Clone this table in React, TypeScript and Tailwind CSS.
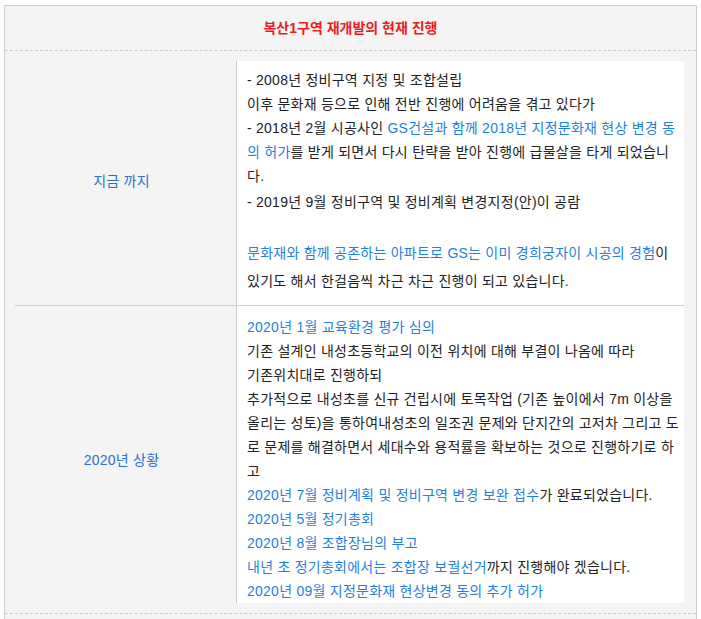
import React from "react";

const B = ({ children }: { children: React.ReactNode }) => (
  <span className="text-[#1f80de]">{children}</span>
);

export default function App() {
  return (
    <div className="pt-[5px] pl-[4px] font-[family-name:'Liberation_Sans','Noto_Sans_CJK_KR',sans-serif] text-[14px] text-[#222]">
      <div className="w-[693px] border border-[#cccccc] bg-[#f4f4f4]">
        <div className="h-[45px] flex items-center justify-center border-b border-dashed border-[#cccccc] text-[14px] font-bold text-[#ee1b24]">
          복산1구역 재개발의 현재 진행
        </div>
        <div className="pl-[10px] pr-[12px] pt-[10px] pb-[10px] tracking-[0.25px]">
          <div className="flex border-b border-[#cccccc]">
            <div className="w-[222px] shrink-0 border-r border-[#c8c8c8] flex items-center justify-center pr-[8px] pb-[3px] text-[#2a70c8]">
              지금 까지
            </div>
            <div className="flex-1 bg-white pl-[10px] pt-[7px] pb-[10px] whitespace-nowrap">
              <div className="leading-[24px]">
                - 2008년 정비구역 지정 및 조합설립
                <br />
                이후 문화재 등으로 인해 전반 진행에 어려움을 겪고 있다가
                <br />
                - 2018년 2월 시공사인 <B>GS건설과 함께 2018년 지정문화재 현상 변경 동</B>
                <br />
                <B>의 허가</B>를 받게 되면서 다시 탄략을 받아 진행에 급물살을 타게 되었습니
                <br />
                다.
              </div>
              <div className="mt-[2px] leading-[24px]">
                - 2019년 9월 정비구역 및 정비계획 변경지정(안)이 공람
              </div>
              <div className="mt-[25px] leading-[28px]">
                <B>문화재와 함께 공존하는 아파트로 GS는 이미 경희궁자이 시공의 경험</B>이
                <br />
                있기도 해서 한걸음씩 차근 차근 진행이 되고 있습니다.
              </div>
            </div>
          </div>
          <div className="flex">
            <div className="w-[222px] shrink-0 border-r border-[#c8c8c8] flex items-center justify-center pr-[8px] pt-[11px] text-[#2a70c8]">
              2020년 상황
            </div>
            <div className="flex-1 bg-white pl-[10px] pt-[9px] leading-[24px] whitespace-nowrap">
              <B>2020년 1월 교육환경 평가 심의</B>
              <br />
              기존 설계인 내성초등학교의 이전 위치에 대해 부결이 나옴에 따라
              <br />
              기존위치대로 진행하되
              <br />
              추가적으로 내성초를 신규 건립시에 토목작업 (기존 높이에서 7m 이상을
              <br />
              올리는 성토)을 통하여내성초의 일조권 문제와 단지간의 고저차 그리고 도
              <br />
              로 문제를 해결하면서 세대수와 용적률을 확보하는 것으로 진행하기로 하
              <br />
              고
              <br />
              <B>2020년 7월 정비계획 및 정비구역 변경 보완 접수</B>가 완료되었습니다.
              <br />
              <B>2020년 5월 정기총회</B>
              <br />
              <B>2020년 8월 조합장님의 부고</B>
              <br />
              <B>내년 초 정기총회에서는 조합장 보궐선거</B>까지 진행해야 겠습니다.
              <br />
              <B>2020년 09월 지정문화재 현상변경 동의 추가 허가</B>
            </div>
          </div>
        </div>
        <div className="h-[30px] border-t border-dashed border-[#cccccc]"></div>
      </div>
    </div>
  );
}
